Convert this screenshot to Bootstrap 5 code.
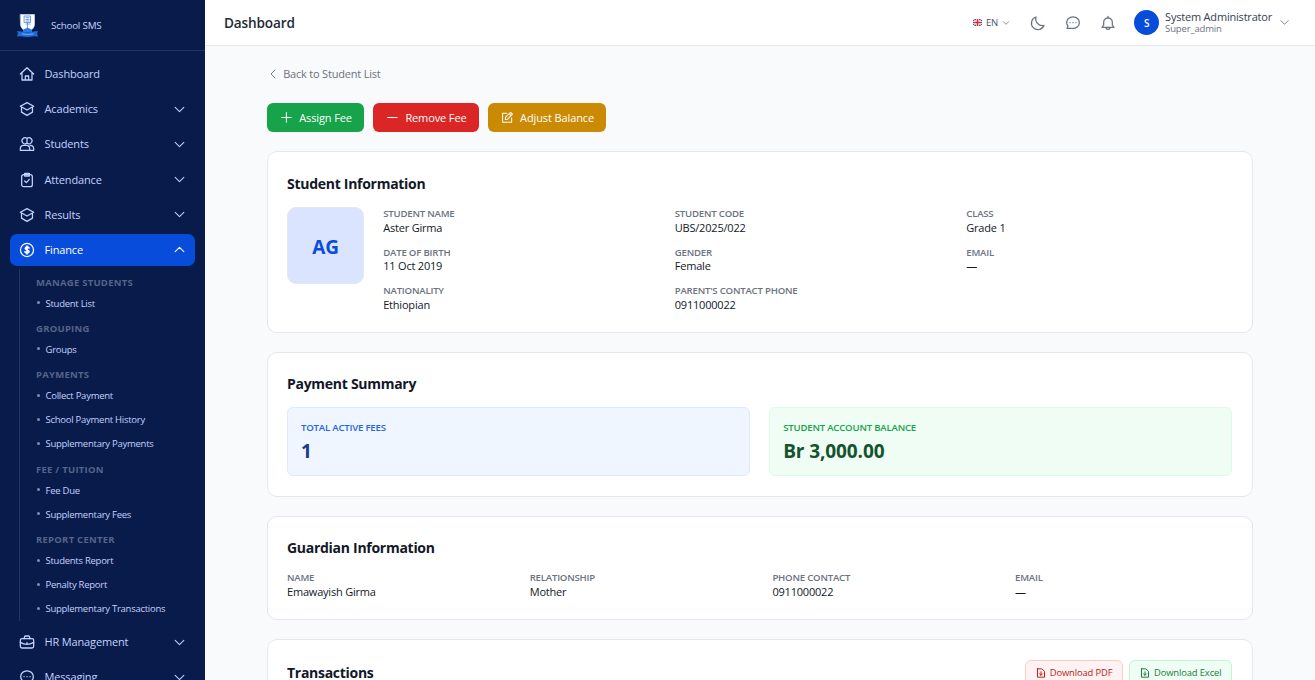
<!DOCTYPE html>
<html lang="en">
<head>
    <meta charset="UTF-8">
    <meta name="viewport" content="width=device-width, initial-scale=1.0">
    <title>School SMS - Student Finance</title>
    <!-- Bootstrap CSS for styling -->
    <link href="https://cdn.jsdelivr.net/npm/bootstrap@5.3.0/dist/css/bootstrap.min.css" rel="stylesheet">
    <style>
        body { font-family: "Open Sans", "Noto Sans", sans-serif; font-size: 11px; line-height: 16px; letter-spacing: -.2px; color: #111827; background: #f9fafb; }
        svg { fill: none; stroke: currentColor; stroke-width: 1.9; stroke-linecap: round; stroke-linejoin: round; flex-shrink: 0; }
        .ico { width: 16px; height: 16px; }
        .chev { width: 13px; height: 13px; }

        /* Sidebar */
        .sidebar { width: 205px; background: #091b4b; color: #c3d2fe; }
        .brand { height: 51px; border-bottom: 1px solid #23335f; padding: 1px 0 0 16px; font-size: 9.8px; }
        .brand span { margin-left: 12px; }
        .menu { padding: 7px 10px 0; }
        .menu-link { height: 32px; margin-bottom: 3.2px; padding: 0 9px; border-radius: 7px; color: #c3d2fe; text-decoration: none; }
        .menu-link span { margin-left: 9.5px; letter-spacing: -.15px; }
        .menu-link.active { background: #084cdb; color: #fff; }
        .submenu { margin: 0 0 5px 9px; border-left: 1px solid #23335f; padding-left: 16px; font-size: 9.5px; }
        .submenu h6 { font-size: 9.5px; font-weight: 700; line-height: 16.8px; padding-top: 5.4px; margin: 0 0 .2px; color: #56648a; letter-spacing: .25px; }
        .submenu a { height: 24px; color: #c3d2fe; text-decoration: none; letter-spacing: -.26px; }
        .submenu a::before { content: ""; width: 3px; height: 3px; border-radius: 50%; background: #7e8cb9; margin: 0 6px 2px .5px; }

        /* Top bar */
        .topbar { height: 46px; border-bottom: 1px solid #e5e7eb; padding: 0 25px 0 19px; color: #6b7280; }
        .topbar h1 { font-size: 13.6px; font-weight: 600; color: #1f2937; letter-spacing: -.15px; padding-top: 1px; }
        .lang { font-size: 9.6px; color: #4b5563; }
        .tb-moon { margin-left: 20px; }
        .tb-gap { margin-left: 19px; }
        .who { width: 25px; height: 25px; margin-left: 18px; background: #084cdb; font-size: 10px; font-weight: 600; }
        .who-text { margin-left: 6px; }
        .who-name { color: #374151; line-height: 13px; }
        .who-role { font-size: 9.5px; line-height: 12px; letter-spacing: -.15px; }
        .tb-end { margin-left: 7px; }

        /* Content */
        .page { width: 985.6px; margin: 0 auto; }
        .back { height: 16px; margin: 20px 0 21px; color: #6b7280; text-decoration: none; }
        .actions { gap: 9.6px; margin-bottom: 19.2px; }
        .action { height: 29px; border-radius: 6px; padding: 0 12px 0 12.8px; gap: 6.4px; color: #fff; font-weight: 500; letter-spacing: -.12px; text-decoration: none; }
        .action svg { width: 12.8px; height: 12.8px; }
        .assign { background: #16a34a; }
        .remove { background: #dc2626; }
        .adjust { background: #ca8a04; }
        .panel { border: 1px solid #e5e7eb; border-radius: 10px; background: #fff; padding: 19.2px 19.6px 19.5px 18.8px; margin-bottom: 19px; }
        .panel h2 { font-size: 14px; font-weight: 700; line-height: 24px; padding-top: .4px; margin: 0 0 10.8px; letter-spacing: -.28px; }
        .panel-head { margin-top: .7px; }
        .avatar-box { width: 77px; height: 77px; border: 1px solid #e5e7eb; border-radius: 9px; background: #dbe4ff; color: #084cdb; font-size: 19px; font-weight: 700; padding-top: 3px; }
        .student { margin: .5px 0 -.5px 19.2px; }
        .fields { --bs-gutter-x: 25.6px; --bs-gutter-y: 9.6px; margin-top: calc(-1 * var(--bs-gutter-y)); }
        .fields > * { margin-top: var(--bs-gutter-y); }
        .caption { font-size: 9.6px; font-weight: 600; line-height: 11.6px; padding-top: 1.2px; color: #6b7280; text-transform: uppercase; letter-spacing: -.2px; }
        .tiles { --bs-gutter-x: 19.2px; }
        .tile { height: 69.2px; border: 1px solid; border-radius: 6px; padding: 13px; }
        .tile strong { display: block; font-size: 19px; line-height: 25.6px; margin-top: 4.8px; letter-spacing: -.1px; }
        .tile-blue { background: #eff6ff; border-color: #dbeafe; color: #1e3a8a; }
        .tile-blue .caption { color: #2563eb; }
        .tile-green { background: #f0fdf4; border-color: #dcfce7; color: #14532d; }
        .tile-green .caption { color: #16a34a; }
        .dl { height: 25px; border: 1px solid; border-radius: 6px; padding: 0 9.8px; gap: 4px; font-size: 9.4px; font-weight: 500; text-decoration: none; letter-spacing: -.12px; }
        .dl svg { width: 10px; height: 10px; }
        .dl-pdf { background: #fef2f2; border-color: #fecaca; color: #b91c1c; }
        .dl-xls { background: #f0fdf4; border-color: #bbf7d0; color: #15803d; margin-left: 6px; }
    </style>
</head>
<body class="vh-100 overflow-hidden">
    <!-- Shared icons -->
    <svg class="d-none">
        <symbol id="home" viewBox="0 0 24 24"><path d="M2 12 12 2.500 22 12M4.500 10v11h15V10M9.500 20.500V15h5v5.500"/></symbol>
        <symbol id="cap" viewBox="0 0 24 24"><path d="M12 2.500 2 7.800 12 13.500l10-5.700L12 2.500ZM3.800 9.500v7.200L12 21.500l8.200-4.800V9.500"/></symbol>
        <symbol id="users" viewBox="0 0 24 24"><path d="M12 3.800a4.500 4.500 0 1 0 0 6.800 4.500 4.500 0 1 0 0-6.800v6.800M2 21.500V19c0-3 2-5 5-5h4c3 0 5 2 5 5v2.500H2ZM16.500 14c3.500 0 5.500 2 5.500 5v2.500h-6"/></symbol>
        <symbol id="clip" viewBox="0 0 24 24"><rect x="4" y="4" width="16" height="18" rx="3"/><path d="M8.500 2h7v4h-7zM8.500 13.500l2.500 2.500 4.500-5"/></symbol>
        <symbol id="dollar" viewBox="0 0 24 24"><circle cx="12" cy="12" r="9.800"/><path stroke-width="2.500" d="M15 9c-.5-1.500-5.500-2-5.500.8C9.500 12.500 15 11.500 15 14.300c0 2.700-5.500 2.200-6 .4M12 6v12"/></symbol>
        <symbol id="case" viewBox="0 0 24 24"><rect x="2" y="7" width="20" height="14" rx="2.500"/><path d="M8 7V5a2 2 0 0 1 2-2h4a2 2 0 0 1 2 2v2M2 12.500c6 3.500 14 3.500 20 0M12 13v2"/></symbol>
        <symbol id="chat" viewBox="0 0 24 24"><path d="M12 2.800c5.500 0 9.500 3.800 9.500 8.700s-4 8.700-9.500 8.700H3l1.500-3.500C3.200 15 2.500 13.300 2.500 11.500c0-4.900 4-8.700 9.500-8.700ZM7.500 11.500h.1M12 11.500h.1M16.500 11.500h.1"/></symbol>
        <symbol id="down" viewBox="0 0 24 24"><path d="m4 8 8 8 8-8"/></symbol>
        <symbol id="file" viewBox="0 0 24 24"><path stroke-width="2.400" d="M3.500 2h10.500l6.500 6v14h-17V2ZM12 9v8M8.500 14l3.500 3.500 3.500-3.500"/></symbol>
    </svg>

    <div class="d-flex h-100">
        <!-- Sidebar -->
        <aside class="sidebar h-100 overflow-hidden flex-shrink-0">
            <div class="brand d-flex align-items-center">
                <svg width="23" height="25" viewBox="0 0 23 25">
                    <path d="M4.500 1.500h14v9.500c0 4-3 6.500-7 8-4-1.500-7-4-7-8Z" fill="#fff" stroke="#dce9ff" stroke-width=".6"/>
                    <path d="M8.500 3h6v6.500h-6zM10 4.700h3M10 6.500h3M10 8h3M10 11h4M11.500 10v5" stroke="#5b93e3" stroke-width=".9"/>
                    <path d="M7 17q4.500-4 9 0v2H7z" fill="#2878e8" stroke="none"/>
                    <path d="M1 18l4 .5q6.500 1.500 13 0L22 18l-1 2.500 1 3-4-.2q-6.500 1.200-13 0L1 23.500l1-3z" fill="#1d6ddc" stroke="none"/>
                    <path d="M6 21q5.500 1 11 0" stroke="#93bdf8" stroke-width=".8"/>
                </svg>
                <span>School SMS</span>
            </div>
            <nav class="menu">
                <a href="#" class="menu-link d-flex align-items-center"><svg class="ico"><use href="#home"/></svg><span>Dashboard</span></a>
                <a href="#" class="menu-link d-flex align-items-center"><svg class="ico"><use href="#cap"/></svg><span>Academics</span><svg class="chev ms-auto"><use href="#down"/></svg></a>
                <a href="#" class="menu-link d-flex align-items-center"><svg class="ico"><use href="#users"/></svg><span>Students</span><svg class="chev ms-auto"><use href="#down"/></svg></a>
                <a href="#" class="menu-link d-flex align-items-center"><svg class="ico"><use href="#clip"/></svg><span>Attendance</span><svg class="chev ms-auto"><use href="#down"/></svg></a>
                <a href="#" class="menu-link d-flex align-items-center"><svg class="ico"><use href="#cap"/></svg><span>Results</span><svg class="chev ms-auto"><use href="#down"/></svg></a>
                <a href="#" class="menu-link active d-flex align-items-center"><svg class="ico"><use href="#dollar"/></svg><span>Finance</span><svg class="chev ms-auto" viewBox="0 0 24 24"><path d="m4 16 8-8 8 8"/></svg></a>
                <div class="submenu">
                    <h6>MANAGE STUDENTS</h6>
                    <a href="#" class="d-flex align-items-center">Student List</a>
                    <h6>GROUPING</h6>
                    <a href="#" class="d-flex align-items-center">Groups</a>
                    <h6>PAYMENTS</h6>
                    <a href="#" class="d-flex align-items-center">Collect Payment</a>
                    <a href="#" class="d-flex align-items-center">School Payment History</a>
                    <a href="#" class="d-flex align-items-center">Supplementary Payments</a>
                    <h6>FEE / TUITION</h6>
                    <a href="#" class="d-flex align-items-center">Fee Due</a>
                    <a href="#" class="d-flex align-items-center">Supplementary Fees</a>
                    <h6>REPORT CENTER</h6>
                    <a href="#" class="d-flex align-items-center">Students Report</a>
                    <a href="#" class="d-flex align-items-center">Penalty Report</a>
                    <a href="#" class="d-flex align-items-center">Supplementary Transactions</a>
                </div>
                <a href="#" class="menu-link d-flex align-items-center"><svg class="ico"><use href="#case"/></svg><span>HR Management</span><svg class="chev ms-auto"><use href="#down"/></svg></a>
                <a href="#" class="menu-link d-flex align-items-center"><svg class="ico"><use href="#chat"/></svg><span>Messaging</span><svg class="chev ms-auto"><use href="#down"/></svg></a>
            </nav>
        </aside>

        <div class="flex-grow-1 overflow-hidden">
            <!-- Top bar -->
            <header class="topbar bg-white d-flex align-items-center">
                <h1 class="m-0 me-auto">Dashboard</h1>
                <div class="lang d-flex align-items-center">
                    <svg width="9" height="7" viewBox="0 0 9 7"><path d="M0 0h9v7H0z" fill="#4a5fa5" stroke="none"/><path d="M0 0l9 7M9 0L0 7" stroke="#fff" stroke-width="1"/><path d="M4.500 0v7M0 3.500h9" stroke="#fff" stroke-width="3" stroke-linecap="butt"/><path d="M4.500 0v7M0 3.500h9" stroke="#d8283e" stroke-width="1.600" stroke-linecap="butt"/></svg>
                    <span class="ms-1">EN</span>
                    <svg class="ms-1" width="8" height="8"><use href="#down"/></svg>
                </div>
                <svg class="ico tb-moon" viewBox="0 0 24 24"><path d="M9 3a9.700 9.700 0 1 0 12 12.500A10 10 0 0 1 9 3Z"/></svg>
                <svg class="ico tb-gap"><use href="#chat"/></svg>
                <svg class="ico tb-gap" viewBox="0 0 24 24"><path d="M12 2v2M5.500 11a6.500 6.500 0 0 1 13 0v4l2.500 3.500H3L5.500 15v-4ZM9 18.500c0 4 6 4 6 0"/></svg>
                <div class="who rounded-circle text-white d-flex align-items-center justify-content-center">S</div>
                <div class="who-text">
                    <div class="who-name">System Administrator</div>
                    <div class="who-role">Super_admin</div>
                </div>
                <svg class="tb-end" width="11" height="11"><use href="#down"/></svg>
            </header>

            <main class="page">
                <a href="#" class="back d-flex align-items-center"><svg class="me-1" width="12" height="12" viewBox="0 0 24 24"><path d="m16 4-8 8 8 8"/></svg>Back to Student List</a>

                <div class="actions d-flex">
                    <a href="#" class="action assign d-flex align-items-center"><svg viewBox="0 0 24 24"><path d="M12 3v18M3 12h18"/></svg>Assign Fee</a>
                    <a href="#" class="action remove d-flex align-items-center"><svg viewBox="0 0 24 24"><path d="M3 12h18"/></svg>Remove Fee</a>
                    <a href="#" class="action adjust d-flex align-items-center"><svg viewBox="0 0 24 24"><path d="M11 4H3v17h17v-8M8 16l.7-4.500L18 2.500l3.500 3.500-9 9.300L8 16ZM15.500 5l3.500 3.500"/></svg>Adjust Balance</a>
                </div>

                <!-- Student information -->
                <section class="panel">
                    <h2>Student Information</h2>
                    <div class="d-flex">
                        <div class="avatar-box flex-shrink-0 d-flex align-items-center justify-content-center">AG</div>
                        <div class="flex-grow-1 student">
                            <div class="row fields">
                                <div class="col-4"><div class="caption">Student Name</div>Aster Girma</div>
                                <div class="col-4"><div class="caption">Student Code</div>UBS/2025/022</div>
                                <div class="col-4"><div class="caption">Class</div>Grade 1</div>
                                <div class="col-4"><div class="caption">Date of Birth</div>11 Oct 2019</div>
                                <div class="col-4"><div class="caption">Gender</div>Female</div>
                                <div class="col-4"><div class="caption">Email</div>—</div>
                                <div class="col-4"><div class="caption">Nationality</div>Ethiopian</div>
                                <div class="col-4"><div class="caption">Parent's Contact Phone</div>0911000022</div>
                            </div>
                        </div>
                    </div>
                </section>

                <!-- Payment summary -->
                <section class="panel">
                    <h2>Payment Summary</h2>
                    <div class="row tiles">
                        <div class="col-6"><div class="tile tile-blue"><div class="caption">Total Active Fees</div><strong>1</strong></div></div>
                        <div class="col-6"><div class="tile tile-green"><div class="caption">Student Account Balance</div><strong>Br 3,000.00</strong></div></div>
                    </div>
                </section>

                <!-- Guardian information -->
                <section class="panel">
                    <h2>Guardian Information</h2>
                    <div class="row fields">
                        <div class="col-3"><div class="caption">Name</div>Emawayish Girma</div>
                        <div class="col-3"><div class="caption">Relationship</div>Mother</div>
                        <div class="col-3"><div class="caption">Phone Contact</div>0911000022</div>
                        <div class="col-3"><div class="caption">Email</div>—</div>
                    </div>
                </section>

                <!-- Transactions -->
                <section class="panel">
                    <div class="panel-head d-flex align-items-center">
                        <h2 class="mb-0 me-auto">Transactions</h2>
                        <a href="#" class="dl dl-pdf d-flex align-items-center"><svg><use href="#file"/></svg>Download PDF</a>
                        <a href="#" class="dl dl-xls d-flex align-items-center"><svg><use href="#file"/></svg>Download Excel</a>
                    </div>
                </section>
            </main>
        </div>
    </div>
    <script src="https://cdn.jsdelivr.net/npm/bootstrap@5.3.0/dist/js/bootstrap.bundle.min.js"></script>
</body>
</html>
